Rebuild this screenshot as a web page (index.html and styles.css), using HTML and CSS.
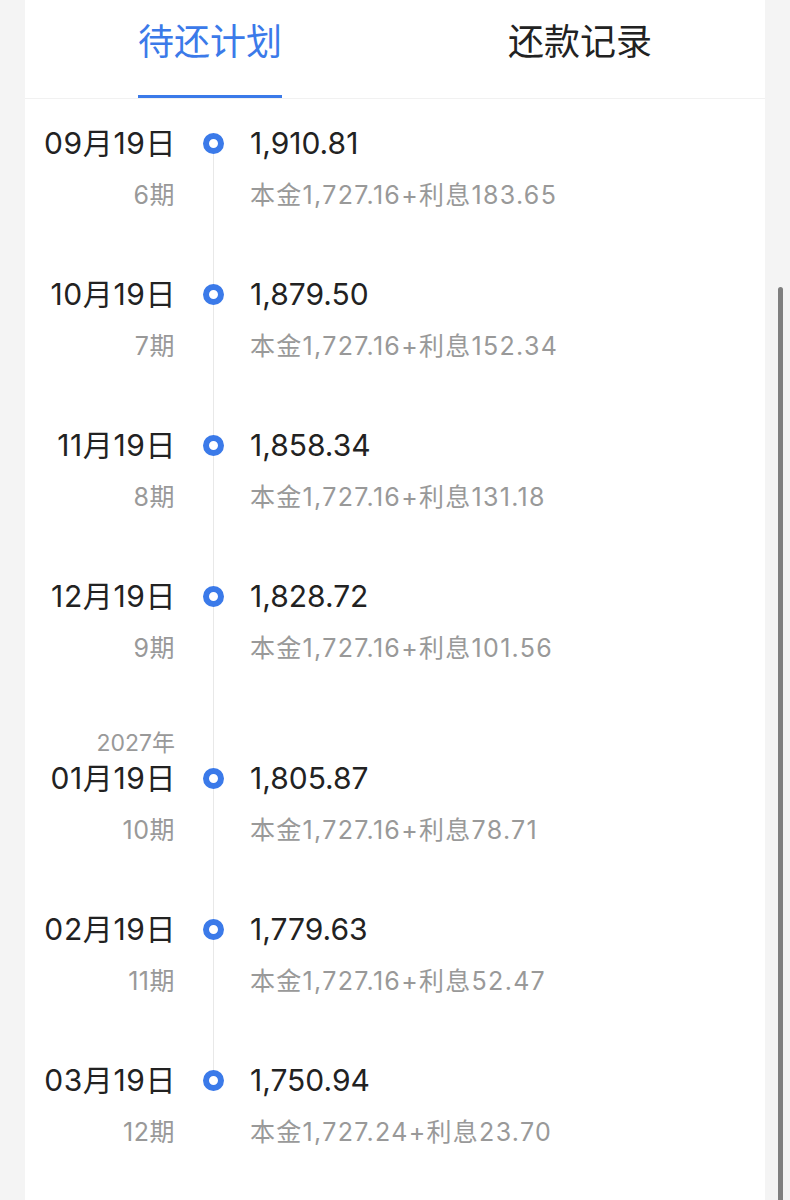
FILE: index.html
```html
<!DOCTYPE html>
<html lang="zh-CN">
    <head>
        <meta charset="UTF-8">
        <title>还款计划</title>
        <link rel="stylesheet" href="styles.css">
    </head>
    <body>
        <div class="card">
            <div class="tabs">
                <div class="tab active"><span>待还计划</span></div>
                <div class="tab"><span>还款记录</span></div>
            </div>

            <!--待还列表-->
            <div class="plan">
                <div class="item first">
                    <div class="when">
                        <div class="date">09月19日</div>
                        <div class="term">6期</div>
                    </div>
                    <div class="axis"><span class="dot"></span></div>
                    <div class="what">
                        <div class="amount">1,910.81</div>
                        <div class="detail">本金1,727.16+利息183.65</div>
                    </div>
                </div>
                <div class="item">
                    <div class="when">
                        <div class="date">10月19日</div>
                        <div class="term">7期</div>
                    </div>
                    <div class="axis"><span class="dot"></span></div>
                    <div class="what">
                        <div class="amount">1,879.50</div>
                        <div class="detail">本金1,727.16+利息152.34</div>
                    </div>
                </div>
                <div class="item">
                    <div class="when">
                        <div class="date">11月19日</div>
                        <div class="term">8期</div>
                    </div>
                    <div class="axis"><span class="dot"></span></div>
                    <div class="what">
                        <div class="amount">1,858.34</div>
                        <div class="detail">本金1,727.16+利息131.18</div>
                    </div>
                </div>
                <div class="item">
                    <div class="when">
                        <div class="date">12月19日</div>
                        <div class="term">9期</div>
                    </div>
                    <div class="axis"><span class="dot"></span></div>
                    <div class="what">
                        <div class="amount">1,828.72</div>
                        <div class="detail">本金1,727.16+利息101.56</div>
                    </div>
                </div>
                <div class="item year-row">
                    <div class="when"><div class="year">2027年</div></div>
                    <div class="axis"></div>
                    <div class="what"></div>
                </div>
                <div class="item">
                    <div class="when">
                        <div class="date">01月19日</div>
                        <div class="term">10期</div>
                    </div>
                    <div class="axis"><span class="dot"></span></div>
                    <div class="what">
                        <div class="amount">1,805.87</div>
                        <div class="detail">本金1,727.16+利息78.71</div>
                    </div>
                </div>
                <div class="item">
                    <div class="when">
                        <div class="date">02月19日</div>
                        <div class="term">11期</div>
                    </div>
                    <div class="axis"><span class="dot"></span></div>
                    <div class="what">
                        <div class="amount">1,779.63</div>
                        <div class="detail">本金1,727.16+利息52.47</div>
                    </div>
                </div>
                <div class="item last">
                    <div class="when">
                        <div class="date">03月19日</div>
                        <div class="term">12期</div>
                    </div>
                    <div class="axis"><span class="dot"></span></div>
                    <div class="what">
                        <div class="amount">1,750.94</div>
                        <div class="detail">本金1,727.24+利息23.70</div>
                    </div>
                </div>
            </div>
        </div>
        <div class="scrollbar"></div>
    </body>
</html>
```

FILE: styles.css
```css
body {
    font-family: Inter, "Noto Sans CJK SC", sans-serif;
    margin: 0;
    padding: 0;
    background: #f4f4f4;
    height: 1200px;
    overflow: hidden;
    position: relative;
}
.card {
    margin: 0 25px;
    background: #fff;
    height: 1200px;
}
.tabs {
    display: flex;
    border-bottom: 1px solid #f1f1f1;
}
.tab {
    flex: 1;
    text-align: center;
    font-size: 36px;
    color: #222;
}
.tab span {
    display: inline-block;
    line-height: 84px;
    padding-bottom: 11px;
    border-bottom: 3px solid transparent;
}
.tab.active span {
    color: #3b7ae9;
    border-bottom-color: #3b7ae9;
}
.plan {
    padding-top: 19px;
}
.item {
    display: grid;
    grid-template-columns: 150px 75px 1fr;
    padding-bottom: 47px;
}
.when {
    text-align: right;
}
.date {
    font-size: 30px;
    line-height: 50px;
    letter-spacing: 0.6px;
    margin-right: -1px;
    color: #222;
}
.term {
    font-size: 25px;
    line-height: 54px;
    letter-spacing: 0.5px;
    color: #999;
}
.amount {
    font-size: 30px;
    line-height: 50px;
    color: #222;
}
.detail {
    font-size: 25px;
    line-height: 54px;
    letter-spacing: 1.3px;
    color: #999;
}
.axis {
    position: relative;
    display: flex;
    margin-bottom: -47px; /* 竖线穿过间隔 */
}
.axis::before {
    content: "";
    position: absolute;
    left: 38px;
    top: 0;
    bottom: 0;
    width: 1px;
    background: #e8e8e8;
}
.item.first .axis::before {
    top: 25px;
}
.item.last .axis::before {
    bottom: auto;
    height: 25px;
}
.dot {
    position: relative;
    width: 21px;
    height: 21px;
    margin-top: 15px;
    margin-left: 28px;
    box-sizing: border-box;
    border: 6px solid #3b7ae9;
    border-radius: 50%;
    background: #fff;
}
.year-row {
    padding-bottom: 0;
    height: 31px;
}
.year-row .axis {
    margin-bottom: 0;
}
.year {
    font-size: 23px;
    line-height: 23px;
    padding-top: 10px;
    color: #999;
}
.scrollbar {
    position: absolute;
    right: 7px;
    top: 287px;
    width: 5px;
    height: 930px;
    border-radius: 3px;
    background: #7f7f7f;
}
```
